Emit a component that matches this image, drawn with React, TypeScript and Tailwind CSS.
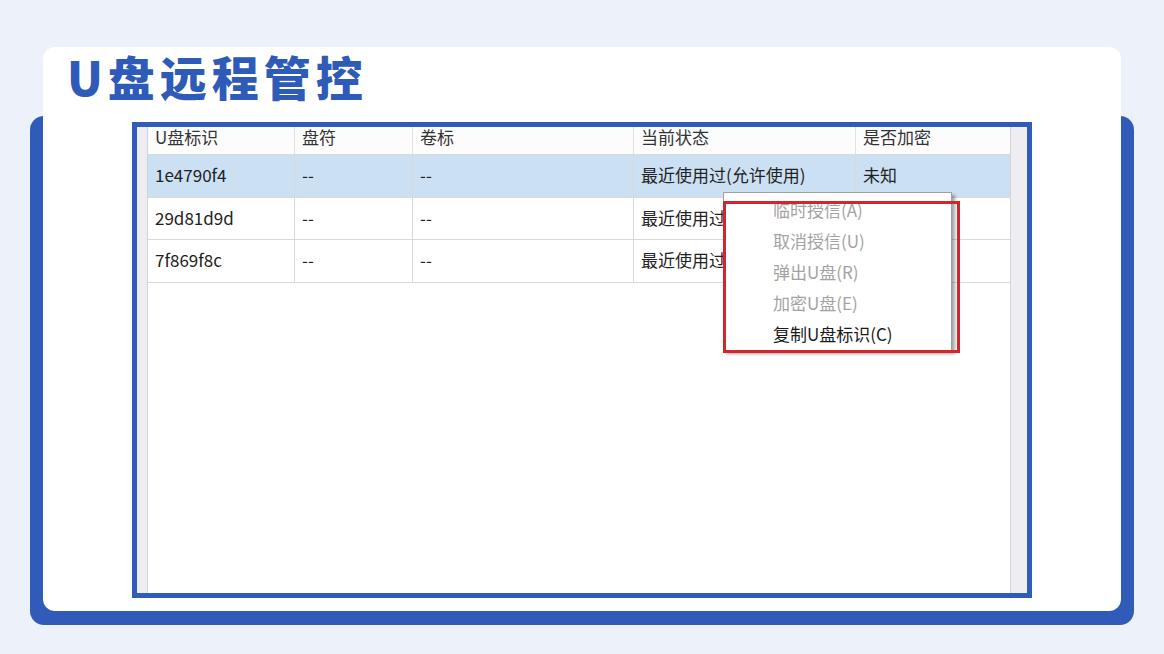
const cjk = { fontFamily: '"Noto Sans CJK SC", "Noto Sans", sans-serif' };

const columns = [
  { title: 'U盘标识', width: 'w-[147px]' },
  { title: '盘符', width: 'w-[118px]' },
  { title: '卷标', width: 'w-[221px]' },
  { title: '当前状态', width: 'w-[222px]' },
  { title: '是否加密', width: 'flex-1' },
];

const rows = [
  { id: '1e4790f4', drive: '--', label: '--', status: '最近使用过(允许使用)', enc: '未知', selected: true },
  { id: '29d81d9d', drive: '--', label: '--', status: '最近使用过', enc: '', selected: false },
  { id: '7f869f8c', drive: '--', label: '--', status: '最近使用过', enc: '', selected: false },
];

const menuItems = [
  { text: '临时授信(A)', enabled: false },
  { text: '取消授信(U)', enabled: false },
  { text: '弹出U盘(R)', enabled: false },
  { text: '加密U盘(E)', enabled: false },
  { text: '复制U盘标识(C)', enabled: true },
];

function DeviceTable() {
  return (
    <div className="relative flex-1 bg-white text-[17px]">
      {/* header, top part is scrolled out of view */}
      <div className="flex h-[28px] border-b border-[#dadada] bg-[#fcfcfc] text-[#333]">
        {columns.map((c, i) => (
          <div
            key={c.title}
            className={`${c.width} pl-[7px] leading-[20px] ${i < 4 ? 'border-r border-[#e0e0e0]' : ''}`}
          >
            {c.title}
          </div>
        ))}
      </div>

      {rows.map((r) => {
        const cells = [r.id, r.drive, r.label, r.status, r.enc];
        return (
          <div
            key={r.id}
            className={`flex h-[42.5px] border-b border-[#d9d9d9] text-[#222] ${r.selected ? 'bg-[#cce0f4]' : 'bg-white'}`}
          >
            {cells.map((v, i) => (
              <div
                key={i}
                className={`${columns[i].width} flex items-center pl-[7px] pb-[2px] ${i < 4 ? 'border-r border-[#d9d9d9]' : ''}`}
              >
                {v}
              </div>
            ))}
          </div>
        );
      })}

      {/* context menu */}
      <div className="absolute left-[575px] top-[65px] w-[229px] h-[159px] border border-[#a0a0a0] bg-white shadow-[3px_3px_3px_rgba(0,0,0,0.35)] pt-[1px]">
        {menuItems.map((m) => (
          <div
            key={m.text}
            className={`h-[31px] flex items-center pl-[49px] ${m.enabled ? 'text-[#1a1a1a]' : 'text-[#a3a3a3]'}`}
          >
            {m.text}
          </div>
        ))}
      </div>

      {/* highlight box */}
      <div className="absolute left-[575px] top-[74px] w-[237px] h-[152px] border-[3px] border-[#d3252b]" />
    </div>
  );
}

export default function App() {
  return (
    <div className="relative w-[1164px] h-[654px] overflow-hidden bg-[#edf1f9] pt-[47px]" style={cjk}>
      {/* blue backing card */}
      <div className="absolute left-[30px] top-[116px] w-[1104px] h-[509px] rounded-[14px] bg-[#315bb9]" />

      <div className="relative ml-[43px] w-[1078px] h-[564px] rounded-[12px] bg-white">
        <div className="h-[75px] pl-[24px] pt-[1px]">
          <h1 className="text-[47px] leading-[56px] font-black tracking-[5px] text-[#2f5bb8]">U盘远程管控</h1>
        </div>

        <div className="ml-[89px] w-[900px] h-[476px] border-[5px] border-[#315bb9] flex bg-white">
          <div className="w-[11px] bg-[#ededf1] border-r border-[#d3d3d8]" />
          <DeviceTable />
          <div className="w-[17px] bg-[#eeeef2] border-l border-[#d4d4d8]" />
        </div>
      </div>
    </div>
  );
}
